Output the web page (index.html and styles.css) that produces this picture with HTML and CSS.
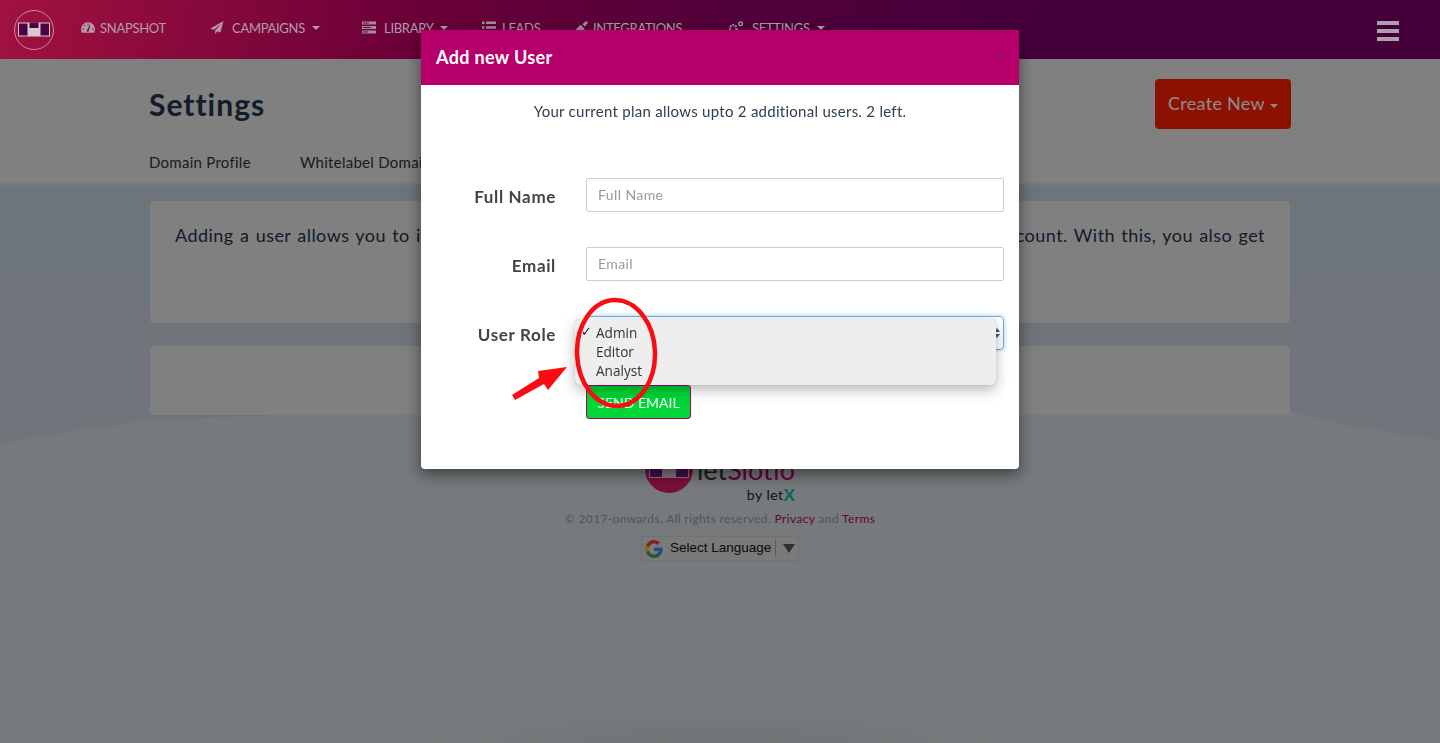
FILE: index.html
```html
<!DOCTYPE html>
<html lang="en">
<head>
<meta charset="utf-8">
<title>Settings</title>
<link rel="stylesheet" href="styles.css">
</head>
<body>
<nav class="nav">
  <a class="brand"><svg width="40" height="40" viewBox="0 0 40 40"><circle cx="20" cy="20" r="19.5" fill="none" stroke="#c58aa0"/><rect x="4" y="12.500" width="32" height="14" fill="#d9c8d4"/><path d="M5 13.500h8.500v12H5zM26.500 13.500H35v12h-8.500zM15.500 12.500h9v5.500h-9z" fill="#4b0142"/></svg></a>
  <a class="item i1"><svg class="ic" viewBox="0 0 16 14"><path fill-rule="evenodd" d="M8 1a7.800 7.800 0 0 0-8 7.800c0 1.500.4 2.900 1.200 4.200h13.600c.8-1.300 1.200-2.700 1.200-4.200A7.800 7.800 0 0 0 8 1zM7.300 2.500h1.400v1.600H7.300zM3 4.700l1-1 1.100 1.100-1 1zM1.700 8.100h1.600v1.400H1.700zM12.700 8.100h1.600v1.400h-1.600zM7 9.500 9.800 4.200l.9.400-1.700 5.500a1.400 1.400 0 1 1-2 -.6z" fill="#b39cab"/></svg>SNAPSHOT</a>
  <a class="item i2"><svg class="ic ic2" viewBox="0 0 14 14"><path d="M14 0 0 8l3.500 1.500L11.500 3 5 10.300V14l2.500-3 3 1.300z" fill="#b39cab"/></svg>CAMPAIGNS<i class="caret"></i></a>
  <a class="item i3"><svg class="ic ic2" viewBox="0 0 14 12"><path d="M0 0h14v3H0zM0 4.500h14v3H0zM0 9h14v3H0z" fill="#a98a9c"/><path d="M1 1h6v1H1zM1 5.500h8v1H1zM1 10h5v1H1z" fill="#5c1040"/></svg>LIBRARY<i class="caret"></i></a>
  <a class="item i4"><svg class="ic ic3" viewBox="0 0 14 12"><path d="M0 0h2.500v2.500H0zM4 0h10v2.500H4zM0 4.700h2.500v2.500H0zM4 4.700h10v2.500H4zM0 9.400h2.500v2.500H0zM4 9.400h10v2.500H4z" fill="#a28ea0"/></svg>LEADS</a>
  <a class="item i5"><svg class="ic ic4" viewBox="0 0 13 14"><path d="M11 0 7 3.500 9.500 6l3.500-4zM0 9l5-5 4.500 4.500C8 11 5 11.500 3 10.500L1 14l-1-1 1.500-2.500z" fill="#a28ea0"/></svg>INTEGRATIONS</a>
  <a class="item i6"><svg class="ic ic5" viewBox="0 0 18 14"><circle cx="6" cy="8" r="3.500" fill="none" stroke="#a28ea0" stroke-width="2.500" stroke-dasharray="2 1"/><circle cx="14" cy="3" r="2" fill="none" stroke="#a28ea0" stroke-width="1.500"/></svg>SETTINGS<i class="caret"></i></a>
  <a class="burger"><span></span><span></span><span></span></a>
</nav>
<header class="sub">
  <div class="sub-top">
    <h1>Settings</h1>
    <button class="create">Create New<i class="caret"></i></button>
  </div>
  <div class="tabs"><a>Domain Profile</a><a>Whitelabel Domain</a></div>
</header>
<main class="main">
  <section class="card card-a"><p>Adding a user allows you to invite your team members to collaborate and work together on your account. With this, you also get</p></section>
  <section class="card card-b"></section>
  <footer class="foot">
    <div class="logo">
      <svg width="48" height="48" viewBox="0 0 48 48"><circle cx="24" cy="24" r="24" fill="#de1d66"/><rect x="4" y="18" width="40" height="15" fill="#f2dbe6"/><path d="M5 18h12v14H5zM31 18h12v14H31z" fill="#7a1a8a"/></svg>
      <div class="logo-text"><span class="wm"><b>let</b>Slotio</span><span class="by">by let<em>X</em></span></div>
    </div>
    <p class="copy">© 2017-onwards. All rights reserved. <a>Privacy</a> and <a>Terms</a></p>
    <div class="gt">
      <svg width="18" height="18" viewBox="0 0 18 18"><path d="M17.600 9.200c0-.6-.1-1.200-.2-1.800H9v3.500h4.800c-.2 1.100-.8 2-1.800 2.700v2.200h2.900c1.700-1.600 2.700-3.900 2.700-6.600z" fill="#4285f4"/><path d="M9 18c2.400 0 4.500-.8 5.900-2.200L12 13.600c-.8.500-1.800.9-3 .9-2.300 0-4.300-1.600-5-3.700H1v2.300C2.500 16 5.500 18 9 18z" fill="#34a853"/><path d="M4 10.700c-.4-1.100-.4-2.300 0-3.400V5H1a9 9 0 0 0 0 8z" fill="#fbbc05"/><path d="M9 3.600c1.300 0 2.500.5 3.400 1.300L15 2.400A9 9 0 0 0 1 5l3 2.300c.7-2.100 2.700-3.700 5-3.700z" fill="#ea4335"/></svg>
      <span class="gt-t">Select Language</span><span class="gt-c"></span>
    </div>
  </footer>
</main>
<div class="backdrop"></div>
<div class="modal">
  <div class="m-head"><h2>Add new User</h2><span class="x">×</span></div>
  <div class="m-body">
    <p class="plan">Your current plan allows upto 2 additional users. 2 left.</p>
    <form class="form">
      <label>Full Name</label><div class="field">Full Name</div>
      <label>Email</label><div class="field">Email</div>
      <label>User Role</label>
      <div class="field sel">
        <svg class="updown" width="6" height="10" viewBox="0 0 6 10"><path d="M3 0l3 4H0zM3 10l3-4H0z" fill="#555"/></svg>
        <ul class="pop"><li class="on">Admin</li><li>Editor</li><li>Analyst</li></ul>
      </div>
      <span></span><button type="button" class="send">SEND EMAIL</button>
    </form>
  </div>
</div>
<svg class="mark" width="1440" height="743" viewBox="0 0 1440 743"><ellipse cx="616" cy="353" rx="39" ry="53" transform="rotate(-2 616 353)" fill="none" stroke="#fa0d12" stroke-width="4.500"/><path d="M512 395 539 378 538 371l29-4-19 23-4-6-29 16z" fill="#fa0d12"/></svg>
</body>
</html>
```
FILE: styles.css
```css
*{box-sizing:border-box}
html,body{margin:0;height:743px;overflow:hidden}
body{font-family:"Lato","Open Sans",sans-serif;background:#fff;color:#2c3e50;display:flex;flex-direction:column}
.nav{position:relative;z-index:20;height:59px;flex:none;background:linear-gradient(100deg,#a1123f 0%,#6c0038 28%,#52003a 50%,#45003a 72%,#45003a 100%);display:flex;align-items:center;padding-left:14px}
.brand{display:block;width:40px;height:40px;margin-right:27px}
.item{display:flex;align-items:center;font-size:13px;color:#b39cab;white-space:nowrap;letter-spacing:-.3px;padding-bottom:4px}
.ic{width:14px;height:13px;margin-right:5px;flex:none}
.ic2{margin-right:8px}
.ic3{margin-right:6px}
.ic4{margin-right:4px}
.ic5{width:18px;margin-right:7px}
.i1{width:129px}
.i2{width:152px}
.i3{width:120px}
.i4{width:93px}
.i5{width:152px}
.i6{width:100px}
.caret{display:inline-block;width:0;height:0;border:4px solid transparent;border-top-color:currentColor;border-bottom:0;margin-left:7px}
.burger{margin-left:auto;margin-right:41px;width:22px;display:flex;flex-direction:column;gap:4px;margin-top:2px}
.burger span{display:block;height:4px;background:#ad9fab}
.sub{background:#e9e9e9;height:126px;flex:none;border-bottom:2px solid #dcdcdc;padding:0 149px}
.sub-top{display:flex;justify-content:space-between;align-items:flex-start;padding-top:20px}
h1{margin:7px 0 0;font-size:30px;font-weight:700;color:#24344f;line-height:36px;letter-spacing:1px}
.create{height:50px;width:136px;padding:0 0 2px;border:0;border-radius:4px;background:#ff2000;color:#fff;font:400 18px "Lato",sans-serif;letter-spacing:.3px}
.create .caret{margin-left:5px;vertical-align:2px}
.tabs{display:flex;gap:49px;margin-top:24px;font-size:15px;color:#333;letter-spacing:.27px}
.main{position:relative;isolation:isolate;flex:1;display:flex;flex-direction:column;align-items:center;padding-top:16px;background:linear-gradient(180deg,#c8d3e0 0,#ccd6e1 270px);overflow:hidden}
.main::before{content:"";position:absolute;z-index:-1;left:-4px;right:-4px;top:0;bottom:-4px;background:radial-gradient(ellipse 300px 40px at 720px 100%,rgba(0,0,0,.06),transparent),#d8dfe2;clip-path:polygon(0 259px,80px 246px,150px 236px,300px 229px,900px 224px,1290px 226px,1350px 240px,1444px 256px,1448px 100%,0 100%)}
.card{width:1140px;background:#e9e9e9;border-radius:4px}
.card-a{height:122px;padding:22px 25px 0}
.card-a p{margin:0;font-size:18px;line-height:24px;text-align:justify;text-align-last:justify;color:#24344f;letter-spacing:.46px}
.card-b{height:69px;margin-top:23px}
.foot{display:flex;flex-direction:column;align-items:center;margin-top:30px;width:100%}
.logo{display:flex;height:66px;width:150px;gap:3px}
.logo-text{display:flex;flex-direction:column;align-items:flex-end;width:99px}
.wm{font-size:27px;line-height:26px;margin-top:12px;color:#c4006f;white-space:nowrap}
.wm b{color:#333;font-weight:400}
.by{display:flex;align-items:center;font-size:14px;line-height:16px;height:16px;margin-top:4px;color:#222;white-space:nowrap;letter-spacing:.5px}
.by em{font-style:normal;font-weight:700;font-size:17px;line-height:14px;color:#00b8a8;letter-spacing:0}
.copy{margin:0;font-size:12px;line-height:16px;color:#999;letter-spacing:.36px}
.copy a{color:#b5006b}
.gt{display:flex;align-items:center;width:158px;height:25px;margin-top:9px;background:#dedfe0;border:1px solid #cfcfcf;padding-left:3px;font:13.500px "Liberation Sans",sans-serif;color:#111}
.gt-t{margin-left:7px;padding-right:4px;border-right:1px solid #aaa;line-height:16px;white-space:nowrap;margin-bottom:1px}
.gt-c{margin-left:7px;border:6px solid transparent;border-top:9px solid #555;border-bottom:0}
.backdrop{position:fixed;inset:0;z-index:10;background:rgba(0,0,0,.45)}
.modal{position:fixed;z-index:30;left:421px;top:30px;width:598px;height:439px;background:#fff;border-radius:0 0 4px 4px;box-shadow:0 5px 15px rgba(0,0,0,.5)}
.m-head{height:55px;background:#b5006b;display:flex;align-items:center;justify-content:space-between;padding:0 15px}
h2{margin:-2px 0 0;font-size:18px;font-weight:700;color:#fff;letter-spacing:.35px}
.x{font-size:20px;line-height:20px;font-weight:700;color:#9a0a60;margin-top:-3px;margin-right:-1px}
.m-body{position:relative;padding:0 15px}
.plan{margin:0;padding-top:17px;height:93px;text-align:center;font-size:15px;line-height:18px;color:#2c3e50;letter-spacing:.27px}
.form{display:grid;grid-template-columns:120px 418px;column-gap:30px;row-gap:35px}
label{text-align:right;font-size:17px;font-weight:700;color:#444;line-height:34px;height:34px;padding-top:2px;letter-spacing:.65px}
.field{position:relative;height:34px;border:1px solid #ccc;border-radius:2px;font-size:14px;line-height:32px;padding-left:11px;color:#999;letter-spacing:.4px}
.sel{border:1px solid #66afe9;box-shadow:0 0 4px rgba(102,175,233,.6);border-radius:4px;letter-spacing:0}
.updown{position:absolute;right:3px;top:11px}
.pop{position:absolute;left:-12px;top:2px;width:421px;height:66px;margin:0;padding:4px 0 0 21px;list-style:none;background:#eee;border-radius:5px;box-shadow:0 0 1px rgba(0,0,0,.35),0 5px 14px rgba(0,0,0,.28);color:#333;font:13.600px/19px "Open Sans",sans-serif}
.on{position:relative}
.on::before{content:"✓";position:absolute;left:-15px;top:-1px;font:13px/19px "DejaVu Sans",sans-serif;color:#222}
.send{height:34px;width:105px;padding:0;border:1px solid #b5006b;border-radius:3px;background:#00d636;color:#fff;font:400 14px "Lato",sans-serif}
.mark{position:fixed;left:0;top:0;z-index:40;pointer-events:none}
```
